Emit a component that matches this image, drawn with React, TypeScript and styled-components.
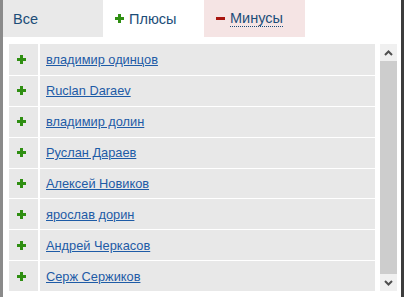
import React from 'react'
import styled, { createGlobalStyle } from 'styled-components'

const GlobalStyle = createGlobalStyle`
  html, body {
    margin: 0;
    padding: 0;
    background: #ffffff;
  }
  body {
    font-family: Arial, "Liberation Sans", sans-serif;
  }
`

const Frame = styled.div`
  width: 404px;
  height: 297px;
  box-sizing: border-box;
  border-left: 3px solid #8a8a8a;
  border-right: 3px solid #3c3c3c;
  display: flex;
  flex-direction: column;
  overflow: hidden;
  background: #fff;
`

const Tabs = styled.div`
  display: flex;
  height: 37px;
  flex-shrink: 0;
`

const Tab = styled.div<{ $bg: string }>`
  width: 100px;
  display: flex;
  align-items: center;
  padding-left: 10px;
  box-sizing: border-box;
  background: ${(p) => p.$bg};
  font-size: 14.5px;
  color: #1c4d78;
  gap: 5px;
  & + & {
    width: 101px;
    padding-left: 12px;
  }
`

const Dotted = styled.span`
  border-bottom: 1px dotted #1c4d78;
  line-height: 15px;
`

const Body = styled.div`
  display: flex;
  padding: 7px 4px 0 6px;
  gap: 5px;
`

const List = styled.table`
  width: 366px;
  border-collapse: separate;
  border-spacing: 0;
`

const Row = styled.tr`
  height: 30px;
  & + & td {
    border-top: 1px solid #ffffff;
  }
`

const IconCell = styled.td`
  width: 21px;
  background: #e8e8e8;
  border-right: 2px solid #ffffff;
  vertical-align: middle;
  padding: 0 0 0 8px;
  line-height: 0;
`

const NameCell = styled.td`
  background: #e8e8e8;
  padding: 0 0 0 6px;
  vertical-align: middle;
  font-size: 12.8px;
`

const Link = styled.a`
  color: #1e5ba6;
  text-decoration: underline;
`

const Scrollbar = styled.div`
  width: 17px;
  height: 247px;
  display: flex;
  flex-direction: column;
  background: #f0f0f0;
`

const ScrollButton = styled.div`
  height: 17px;
  display: flex;
  align-items: center;
  justify-content: center;
  background: #f0f0f0;
`

const Thumb = styled.div`
  flex: 1;
  background: #cdcdcd;
`

const Plus = ({ size = 9 }: { size?: number }) => (
  <svg width={size} height={size} viewBox="0 0 9 9">
    <path d="M3 0h3v3h3v3H6v3H3V6H0V3h3z" fill="#2f8f12" />
  </svg>
)

const Minus = () => (
  <svg width="9" height="9" viewBox="0 0 9 9">
    <rect x="0" y="3" width="9" height="3" fill="#a8150f" />
  </svg>
)

const Chevron = ({ up }: { up?: boolean }) => (
  <svg width="9" height="6" viewBox="0 0 9 6">
    <path
      d={up ? 'M1 5L4.5 1.5 8 5' : 'M1 1l3.5 3.5L8 1'}
      fill="none"
      stroke="#505050"
      strokeWidth="2"
    />
  </svg>
)

const names = [
  'владимир одинцов',
  'Ruclan Daraev',
  'владимир долин',
  'Руслан Дараев',
  'Алексей Новиков',
  'ярослав дорин',
  'Андрей Черкасов',
  'Серж Сержиков'
]

export default function App() {
  return (
    <>
      <GlobalStyle />
      <Frame>
        <Tabs>
          <Tab $bg="#e9e9e9">Все</Tab>
          <Tab $bg="#ffffff">
            <Plus />
            <span>Плюсы</span>
          </Tab>
          <Tab $bg="#f5e4e4">
            <Minus />
            <Dotted>Минусы</Dotted>
          </Tab>
        </Tabs>
        <Body>
          <List>
            <tbody>
              {names.map((n) => (
                <Row key={n}>
                  <IconCell>
                    <Plus />
                  </IconCell>
                  <NameCell>
                    <Link href="#">{n}</Link>
                  </NameCell>
                </Row>
              ))}
            </tbody>
          </List>
          <Scrollbar>
            <ScrollButton>
              <Chevron up />
            </ScrollButton>
            <Thumb />
            <ScrollButton>
              <Chevron />
            </ScrollButton>
          </Scrollbar>
        </Body>
      </Frame>
    </>
  )
}
